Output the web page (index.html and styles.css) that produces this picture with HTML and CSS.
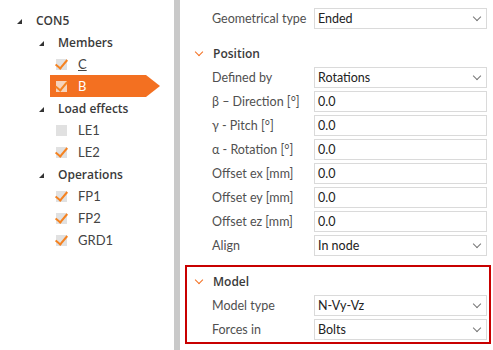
FILE: index.html
```html
<!DOCTYPE html>
<html lang="en">
<head>
    <meta charset="UTF-8">
    <title>Connection properties</title>
    <link rel="stylesheet" href="styles.css">
</head>
<body>
    <div class="app">
        <div class="tree">
            <div class="node lvl0"><span class="expander"></span><span class="node-title">CON5</span></div>
            <div class="node lvl1"><span class="expander"></span><span class="node-title">Members</span></div>
            <div class="node leaf"><span class="check on"></span><span class="underline">C</span></div>
            <div class="node leaf selected"><span class="check on"></span><span>B</span></div>
            <div class="node lvl1"><span class="expander"></span><span class="node-title">Load effects</span></div>
            <div class="node leaf"><span class="check"></span><span>LE1</span></div>
            <div class="node leaf"><span class="check on"></span><span>LE2</span></div>
            <div class="node lvl1"><span class="expander"></span><span class="node-title">Operations</span></div>
            <div class="node leaf"><span class="check on"></span><span>FP1</span></div>
            <div class="node leaf"><span class="check on"></span><span>FP2</span></div>
            <div class="node leaf"><span class="check on"></span><span>GRD1</span></div>
        </div>

        <div class="splitter"></div>

        <div class="props">
            <div class="row">
                <label>Geometrical type</label>
                <div class="field select">Ended</div>
            </div>

            <div class="section">
                <div class="section-head"><span class="chev"></span>Position</div>
                <div class="row"><label>Defined by</label><div class="field select">Rotations</div></div>
                <div class="row"><label>β – Direction [°]</label><div class="field">0.0</div></div>
                <div class="row"><label>γ - Pitch [°]</label><div class="field">0.0</div></div>
                <div class="row"><label>α - Rotation [°]</label><div class="field">0.0</div></div>
                <div class="row"><label>Offset ex [mm]</label><div class="field">0.0</div></div>
                <div class="row"><label>Offset ey [mm]</label><div class="field">0.0</div></div>
                <div class="row"><label>Offset ez [mm]</label><div class="field">0.0</div></div>
                <div class="row"><label>Align</label><div class="field select">In node</div></div>
            </div>

            <div class="section highlight">
                <div class="section-head"><span class="chev"></span>Model</div>
                <div class="row"><label>Model type</label><div class="field select">N-Vy-Vz</div></div>
                <div class="row"><label>Forces in</label><div class="field select">Bolts</div></div>
            </div>
        </div>
    </div>
</body>
</html>
```

FILE: styles.css
```css
* {
    margin: 0;
    padding: 0;
    box-sizing: border-box;
}

body {
    background: #fff;
    font-family: 'Lato', 'Noto Sans', sans-serif;
    font-size: 12.5px;
    color: #444;
}

.app {
    display: flex;
    height: 350px;
    overflow: hidden;
}

/* tree on the left */
.tree {
    width: 174px;
    padding-top: 9px;
}

.node {
    height: 22px;
    display: flex;
    align-items: center;
    white-space: nowrap;
}

.node-title {
    font-family: 'Open Sans', sans-serif;
    font-size: 12px;
    font-weight: 600;
    color: #3a3a3a;
}

.lvl0 {
    padding-left: 17px;
}

.lvl1 {
    padding-left: 39px;
}

.expander {
    width: 0;
    height: 0;
    border-left: 5px solid transparent;
    border-bottom: 5px solid #333;
    margin-right: 14px;
    margin-top: 2px;
}

.leaf {
    padding-left: 56px;
    font-size: 13px;
    color: #444;
}

.check {
    position: relative;
    width: 11px;
    height: 11px;
    background: #e1e1e1;
    margin-right: 11px;
}

.check.on::after {
    content: "";
    position: absolute;
    left: 2px;
    top: -2px;
    width: 5px;
    height: 10px;
    border-right: 2px solid #f58220;
    border-bottom: 2px solid #f58220;
    transform: rotate(40deg);
}

.underline {
    text-decoration: underline;
}

.selected {
    position: relative;
    margin-left: 50px;
    padding-left: 6px;
    width: 96px;
    background: #f37021;
    color: #fff;
}

.selected::after {
    content: "";
    position: absolute;
    right: -14px;
    top: 0;
    border-top: 11px solid transparent;
    border-bottom: 11px solid transparent;
    border-left: 14px solid #f37021;
}

.selected .check {
    background: #f6d3bc;
}

.splitter {
    width: 6px;
    background: #c9c9c9;
}

/* property grid */
.props {
    flex: 1;
    padding: 6px 6px 0 6px;
}

.row {
    display: flex;
    align-items: center;
    height: 24px;
    padding-left: 26px;
}

.row label {
    width: 102px;
    color: #505050;
    white-space: nowrap;
}

.field {
    position: relative;
    width: 173px;
    height: 21px;
    border: 1px solid #dadada;
    padding: 1px 3px;
    color: #222;
    line-height: 17px;
}

.select::after {
    content: "";
    position: absolute;
    right: 6px;
    top: 5px;
    width: 5px;
    height: 5px;
    border-right: 1px solid #777;
    border-bottom: 1px solid #777;
    transform: rotate(45deg);
}

.section {
    margin-top: 11px;
}

.section-head {
    display: flex;
    align-items: center;
    height: 24px;
    padding-left: 10px;
    font-family: 'Open Sans', sans-serif;
    font-size: 12px;
    font-weight: 600;
    color: #3a3a3a;
}

.chev {
    width: 6px;
    height: 6px;
    border-right: 1px solid #f37021;
    border-bottom: 1px solid #f37021;
    transform: rotate(45deg);
    margin: -3px 11px 0 0;
}

.highlight {
    margin-top: 8px;
    margin-left: -1px;
    margin-right: -4px;
    border: 2px solid #c80000;
    padding: 2px 0 1px 0;
}

.highlight .section-head {
    padding-left: 9px;
}

.highlight .row {
    padding-left: 25px;
}
```
